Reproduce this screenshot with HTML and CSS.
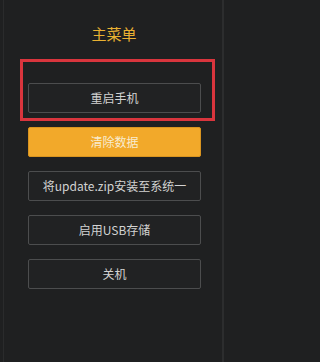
FILE: index.html
```html
<!DOCTYPE html>
<html lang="zh">
<head>
<meta charset="utf-8">
<link rel="stylesheet" href="styles.css">
</head>
<body>
<div class="screen">
  <h1 class="title">主菜单</h1>
  <div class="menu">
    <div class="btn">重启手机</div>
    <div class="btn btn-active">清除数据</div>
    <div class="btn">将update.zip安装至系统一</div>
    <div class="btn">启用USB存储</div>
    <div class="btn">关机</div>
  </div>
  <div class="highlight"></div>
</div>
</body>
</html>
```
FILE: styles.css
```css
html, body {
  margin: 0;
  padding: 0;
  background: #1f2021;
}
.screen {
  position: relative;
  width: 228px;
  height: 362px;
  box-sizing: border-box;
  border-left: 1px solid #1f2021;
  font-family: "Noto Sans CJK SC", "Noto Sans", sans-serif;
  background:
    linear-gradient(to right, transparent 3px, #2a2b2c 3px, #2a2b2c 4px, transparent 4px, transparent 222px, #2c2d2e 222px, #2c2d2e 224px, transparent 224px);
  overflow: hidden;
}
.screen { border-left: 0; }
.title {
  margin: 0;
  padding-top: 24px;
  height: 20px;
  text-align: center;
  font-size: 15px;
  line-height: 20px;
  font-weight: normal;
  color: #e9b132;
}
.menu {
  display: flex;
  flex-direction: column;
  gap: 14px;
  padding: 39px 27px 0 28px;
}
.btn {
  height: 30px;
  box-sizing: border-box;
  border: 1px solid #4c4d4e;
  border-radius: 2px;
  background: #212223;
  color: #d2d2d2;
  font-size: 12px;
  line-height: 28px;
  text-align: center;
  white-space: nowrap;
}
.btn-active {
  background: #f2a92a;
  border-color: #d99420;
  color: #f8ecd0;
}
.highlight {
  position: absolute;
  left: 20px;
  top: 59px;
  width: 195px;
  height: 62px;
  box-sizing: border-box;
  border: 3px solid #d9353d;
}
```
